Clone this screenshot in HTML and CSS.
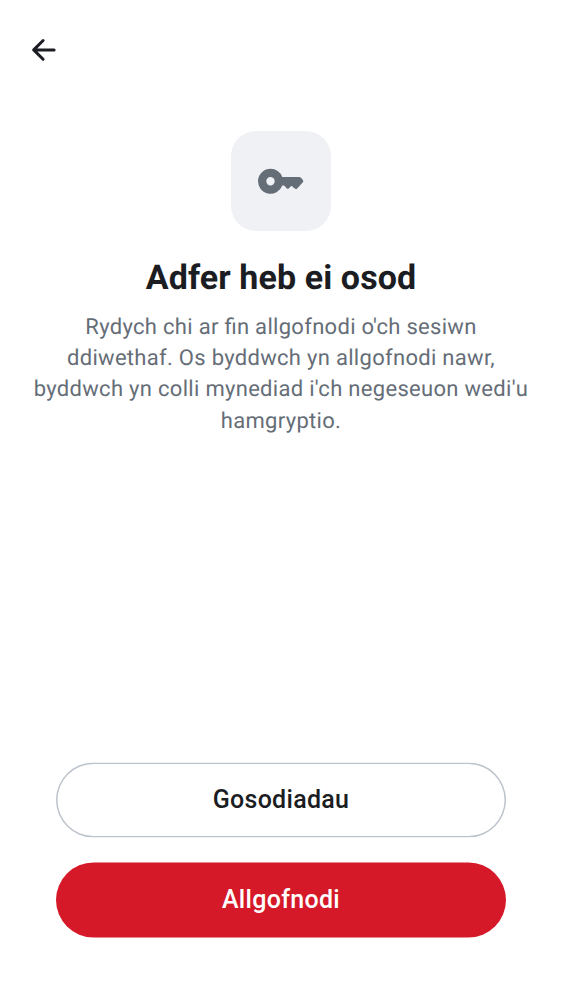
FILE: index.html
```html
<!DOCTYPE html>
<html lang="cy">
<head>
<meta charset="utf-8">
<title>Adfer heb ei osod</title>
<link rel="stylesheet" href="styles.css">
</head>
<body>
<div class="screen">
  <header class="topbar">
    <button class="back" aria-label="Back">
      <svg viewBox="0 0 24 24" width="24" height="24"><path d="M22.100 11.900H1.700M11.100 2.500 1.700 11.900l9.400 9.400" /></svg>
    </button>
  </header>
  <main class="content">
    <div class="icon-tile">
      <svg viewBox="0 0 46 28" width="46" height="28"><path fill-rule="evenodd" d="M12.500 1.700A12.500 12.500 0 1 0 24.300 18.400H26L28.600 21.200Q29.800 22.400 31 21.200L33.400 18.800 36.700 21.600Q38 22.600 39.200 21.500L44.600 15.600Q45.900 14.200 44.700 12.800L43 10.700Q42.300 9.900 41.200 9.900H24.300A12.500 12.500 0 0 0 12.500 1.700ZM12.500 10A4.200 4.200 0 1 1 12.500 18.400 4.200 4.200 0 0 1 12.500 10Z" /></svg>
    </div>
    <h1 class="title">Adfer heb ei osod</h1>
    <p class="message">Rydych chi ar fin allgofnodi o'ch sesiwn<br>ddiwethaf. Os byddwch yn allgofnodi nawr,<br>byddwch yn colli mynediad i'ch negeseuon wedi'u<br>hamgryptio.</p>
  </main>
  <footer class="actions">
    <button class="button outlined">Gosodiadau</button>
    <button class="button filled">Allgofnodi</button>
  </footer>
</div>
</body>
</html>
```
FILE: styles.css
```css
* { box-sizing: border-box; }
body { margin: 0; background: #fff; font-family: Roboto, sans-serif; text-rendering: geometricPrecision; }
.screen { height: 1000px; display: flex; flex-direction: column; }
.topbar { height: 100px; padding: 38px 32px; }
.back { display: block; width: 24px; height: 24px; padding: 0; border: 0; background: none; }
.back svg { display: block; overflow: visible; fill: none; stroke: #1b1d22; stroke-width: 3; stroke-linecap: round; stroke-linejoin: round; }
.content { flex: 1; padding-top: 31px; display: flex; flex-direction: column; align-items: center; }
.icon-tile { width: 100px; height: 100px; border-radius: 25px; background: #f0f1f5; display: flex; align-items: center; justify-content: center; }
.icon-tile svg { fill: #656d77; }
.title { margin: 26px 0 0; font-size: 34px; line-height: 42px; font-weight: 700; letter-spacing: .1px; color: #1b1d22; white-space: nowrap; }
.message { margin: 13px 0 0; font-size: 22px; line-height: 31.200px; letter-spacing: .3px; font-feature-settings: "liga" 1; color: #656d77; text-align: center; white-space: nowrap; }
.actions { padding: 0 56px 62px; display: flex; flex-direction: column; gap: 25px; }
.button { height: 75px; padding: 0 6px 1px; border-radius: 37.500px; border: 0; font: 500 25px/30px Roboto, sans-serif; letter-spacing: .3px; transform: translateY(-.5px); }
.outlined { background: #fff; box-shadow: inset 0 0 0 1.500px #bdc3cc; color: #1b1d22; }
.filled { background: #d51928; color: #fff; }
```
